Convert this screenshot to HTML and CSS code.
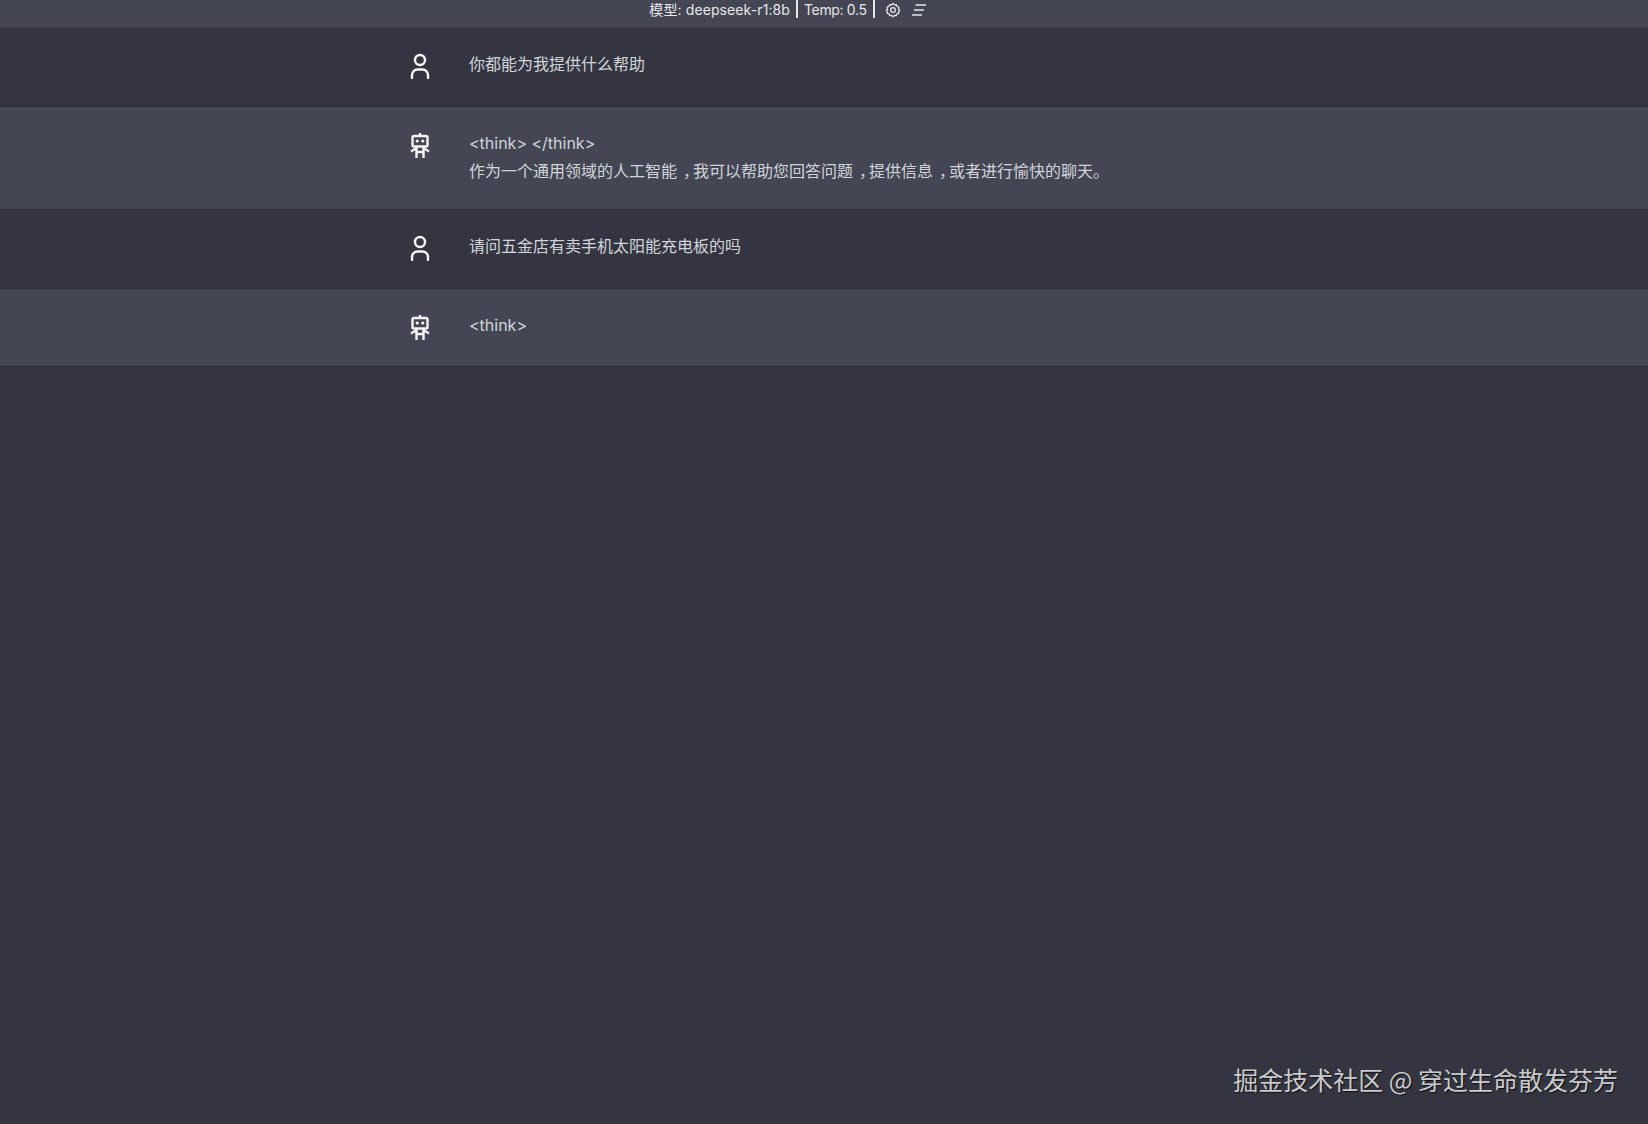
FILE: index.html
```html
<!DOCTYPE html>
<html lang="zh-CN">
<head>
  <meta charset="UTF-8" />
  <title>Chat</title>
  <link rel="stylesheet" href="styles.css">
</head>
<body>
  <div class="topbar">
    <span class="model">模型: deepseek-r1:8b</span>
    <span class="sep"></span>
    <span class="temp">Temp: 0.5</span>
    <span class="sep"></span>
    <svg class="top-icon gear" viewBox="0 0 24 24" fill="none" stroke="currentColor" stroke-width="2" stroke-linejoin="round">
      <path d="M12 2l2.200 2.500 3.200-.6 1.100 3.100 3.100 1.100-.6 3.200L23 13.500l-2 1.500.6 3-3.100 1.100-1.100 3-3.200-.6L12 24l-2.200-2.500-3.200.6-1.100-3-3.100-1.100.6-3-2-1.500 2-2.200-.6-3.200L5.500 7l1.100-3.100 3.200.6z" transform="translate(1 .2) scale(.92)"/>
      <circle cx="12" cy="12" r="3.500"/>
    </svg>
    <svg class="top-icon menu" viewBox="0 0 16 16" fill="none" stroke="currentColor" stroke-width="1.300" stroke-linecap="round">
      <path d="M5 3h9.500M3.500 8h9M1.500 13h9"/>
    </svg>
  </div>

  <div class="row">
    <div class="row-inner">
      <svg class="avatar" viewBox="0 0 20 26" fill="none" stroke="currentColor" stroke-width="2.400" stroke-linecap="round"><use href="#user"/></svg>
      <div class="text"><p>你都能为我提供什么帮助</p></div>
    </div>
  </div>
  <div class="row bot">
    <div class="row-inner">
      <svg class="avatar" viewBox="0 0 20 26" fill="none" stroke="currentColor" stroke-width="2.400"><use href="#robot"/></svg>
      <div class="text">
        <p>&lt;think&gt; &lt;/think&gt;</p>
        <p>作为一个通用领域的人工智能<span class="punct">，</span>我可以帮助您回答问题<span class="punct">，</span>提供信息<span class="punct">，</span>或者进行愉快的聊天。</p>
      </div>
    </div>
  </div>
  <div class="row">
    <div class="row-inner">
      <svg class="avatar" viewBox="0 0 20 26" fill="none" stroke="currentColor" stroke-width="2.400" stroke-linecap="round"><use href="#user"/></svg>
      <div class="text"><p>请问五金店有卖手机太阳能充电板的吗</p></div>
    </div>
  </div>
  <div class="row bot short">
    <div class="row-inner">
      <svg class="avatar" viewBox="0 0 20 26" fill="none" stroke="currentColor" stroke-width="2.400"><use href="#robot"/></svg>
      <div class="text"><p>&lt;think&gt;</p></div>
    </div>
  </div>

  <div class="watermark">掘金技术社区 @ 穿过生命散发芬芳</div>

  <svg class="defs" width="0" height="0">
    <defs>
      <g id="user">
        <circle cx="10" cy="7" r="5"/>
        <path d="M2 25v-3a5.500 5.500 0 0 1 5.500-5.500h5A5.500 5.500 0 0 1 18 22v3"/>
      </g>
      <g id="robot">
        <path d="M10 0v3"/>
        <rect x="2.500" y="3" width="15" height="10.500" rx="1.500"/>
        <path d="M6.500 14v11M13.500 14v11M6.500 19h7M6.500 15L1 18.500M13.500 15l5.500 3.500"/>
        <circle cx="7.200" cy="8" r="1.600" fill="currentColor" stroke="none"/>
        <circle cx="12.800" cy="8" r="1.600" fill="currentColor" stroke="none"/>
      </g>
    </defs>
  </svg>
</body>
</html>
```

FILE: styles.css
```css
html, body {
  height: 100%;
}

body {
  margin: 0;
  background-color: #343541;
  color: #d1d5db;
  font-family: Inter, "Noto Sans CJK SC", sans-serif;
  font-size: 16px;
  position: relative;
  overflow: hidden;
}

.topbar {
  height: 27px;
  line-height: 20px;
  background-color: #444654;
  border-bottom: 1px solid #3b3c49;
  display: flex;
  align-items: flex-start;
  justify-content: center;
  color: #e5e7eb;
  font-size: 14px;
  padding-right: 72px;
}

.model {
  letter-spacing: 0.1px;
}

.temp {
  letter-spacing: -0.35px;
}

.sep {
  width: 2px;
  height: 18px;
  background-color: #e5e7eb;
  margin: 0 6px;
}

.top-icon {
  width: 16px;
  height: 16px;
  color: #e5e7eb;
  margin-top: 2px;
}

.gear {
  margin-left: 4px;
}

.menu {
  margin-left: 10px;
}

.row {
  border-bottom: 1px solid #2c2d38;
  padding-top: 22px;
  min-height: 56px;
}

.row.short {
  min-height: 55px;
}

.row.bot {
  background-color: #444654;
}

.row-inner {
  display: flex;
  margin-left: 410px;
}

.avatar {
  width: 20px;
  height: 26px;
  flex: none;
  color: #f3f4f6;
  margin: 3px 39px 0 0;
}

.bot .avatar {
  margin-top: 4px;
}

.text {
  padding-bottom: 24px;
}

.text p {
  margin: 0;
  line-height: 28px;
}

.short .text {
  padding-bottom: 0;
}

.punct {
  padding-left: 6px;
  letter-spacing: -6px;
}

.watermark {
  position: absolute;
  right: 30px;
  bottom: 29px;
  font-size: 25px;
  line-height: 32px;
  color: #c9cacd;
  text-shadow: 1px 1px 1px #111;
  font-family: "Noto Sans CJK SC", sans-serif;
}

.defs {
  position: absolute;
}
```
